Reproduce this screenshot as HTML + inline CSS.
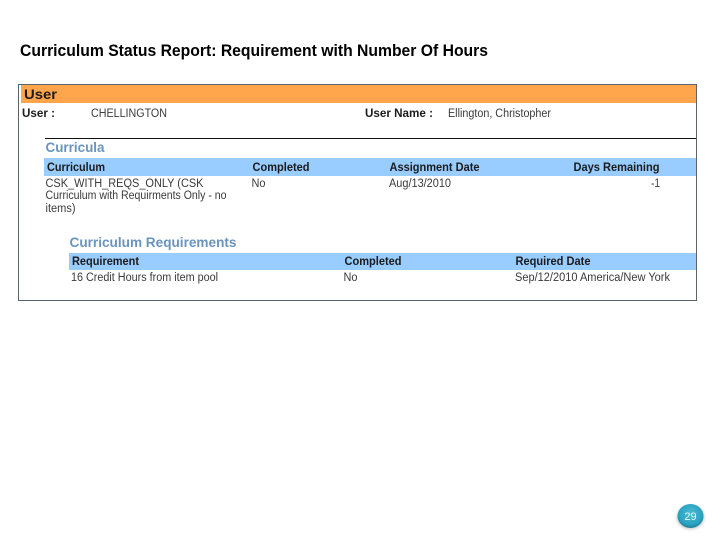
<!DOCTYPE html>
<html lang="en">
<head>
<meta charset="utf-8">
<title>Curriculum Status Report</title>
<style>
html,body{margin:0;padding:0;background:#fff;width:720px;height:540px;overflow:hidden}
svg{display:block}
text{font-family:"Liberation Sans",Arial,sans-serif}
.b{font-weight:bold;font-size:11.500px;fill:#1a1a1a}
.r{font-size:11.500px;fill:#3a3a3a}
.h{font-weight:bold;fill:#6a94bd}
</style>
</head>
<body>
<svg width="720" height="540" viewBox="0 0 720 540" xmlns="http://www.w3.org/2000/svg">
<defs>
<radialGradient id="g" cx="50%" cy="40%" r="60%">
<stop offset="0%" stop-color="#4cbcd4"/>
<stop offset="75%" stop-color="#2ba3c0"/>
<stop offset="100%" stop-color="#1f8098"/>
</radialGradient>
<filter id="s" x="-30%" y="-30%" width="160%" height="160%"><feGaussianBlur stdDeviation="1.2"/></filter>
<filter id="soft" x="0" y="0" width="100%" height="100%" filterUnits="userSpaceOnUse"><feGaussianBlur stdDeviation="0.3"/></filter>
</defs>
<text x="20" y="56" font-size="16.500" font-weight="bold" fill="#000" textLength="468" lengthAdjust="spacingAndGlyphs">Curriculum Status Report: Requirement with Number Of Hours</text>

<rect x="18.500" y="84.500" width="678" height="216" fill="#fff" stroke="#59636b" stroke-width="1"/>
<rect x="21" y="85" width="675" height="18" fill="#ffa64d"/>
<rect x="45" y="138" width="651" height="1" fill="#111"/>
<rect x="44" y="158" width="652" height="18" fill="#99ccff"/>
<rect x="69" y="253" width="627" height="17" fill="#99ccff"/>

<g filter="url(#soft)">
<text x="24" y="99" font-size="14" font-weight="bold" fill="#1a1a1a" textLength="33" lengthAdjust="spacingAndGlyphs">User</text>
<text x="22" y="117" class="b" textLength="33" lengthAdjust="spacingAndGlyphs">User :</text>
<text x="91" y="117" class="r" textLength="76" lengthAdjust="spacingAndGlyphs">CHELLINGTON</text>
<text x="365" y="117" class="b" textLength="68" lengthAdjust="spacingAndGlyphs">User Name :</text>
<text x="448" y="117" class="r" textLength="103" lengthAdjust="spacingAndGlyphs">Ellington, Christopher</text>

<text x="45.500" y="152" font-size="14" class="h" textLength="59" lengthAdjust="spacingAndGlyphs">Curricula</text>
<text x="47" y="171" class="b" textLength="58" lengthAdjust="spacingAndGlyphs">Curriculum</text>
<text x="252.500" y="171" class="b" textLength="57" lengthAdjust="spacingAndGlyphs">Completed</text>
<text x="389.500" y="171" class="b" textLength="90" lengthAdjust="spacingAndGlyphs">Assignment Date</text>
<text x="573.500" y="171" class="b" textLength="86" lengthAdjust="spacingAndGlyphs">Days Remaining</text>

<text x="45.500" y="187" class="r" textLength="158" lengthAdjust="spacingAndGlyphs">CSK_WITH_REQS_ONLY (CSK</text>
<text x="45.500" y="199" class="r" textLength="181" lengthAdjust="spacingAndGlyphs">Curriculum with Requirments Only - no</text>
<text x="45.500" y="212" class="r" textLength="30" lengthAdjust="spacingAndGlyphs">items)</text>
<text x="251.500" y="187" class="r" textLength="14" lengthAdjust="spacingAndGlyphs">No</text>
<text x="389" y="187" class="r" textLength="62" lengthAdjust="spacingAndGlyphs">Aug/13/2010</text>
<text x="651" y="187" class="r" textLength="9" lengthAdjust="spacingAndGlyphs">-1</text>

<text x="69.500" y="247" font-size="13.500" class="h" textLength="167" lengthAdjust="spacingAndGlyphs">Curriculum Requirements</text>
<text x="72" y="265" class="b" textLength="67" lengthAdjust="spacingAndGlyphs">Requirement</text>
<text x="344.500" y="265" class="b" textLength="57" lengthAdjust="spacingAndGlyphs">Completed</text>
<text x="515.500" y="265" class="b" textLength="75" lengthAdjust="spacingAndGlyphs">Required Date</text>
<text x="71" y="281" class="r" textLength="147" lengthAdjust="spacingAndGlyphs">16 Credit Hours from item pool</text>
<text x="343.500" y="281" class="r" textLength="14" lengthAdjust="spacingAndGlyphs">No</text>
<text x="515" y="281" class="r" textLength="155" lengthAdjust="spacingAndGlyphs">Sep/12/2010 America/New York</text>
</g>

<ellipse cx="690.500" cy="517.500" rx="14" ry="12" fill="#9a9a9a" opacity=".45" filter="url(#s)"/>
<ellipse cx="690.500" cy="516" rx="13" ry="12" fill="url(#g)"/>
<text x="690.500" y="520" font-size="11" fill="#e8f8fb" text-anchor="middle">29</text>
</svg>
</body>
</html>
